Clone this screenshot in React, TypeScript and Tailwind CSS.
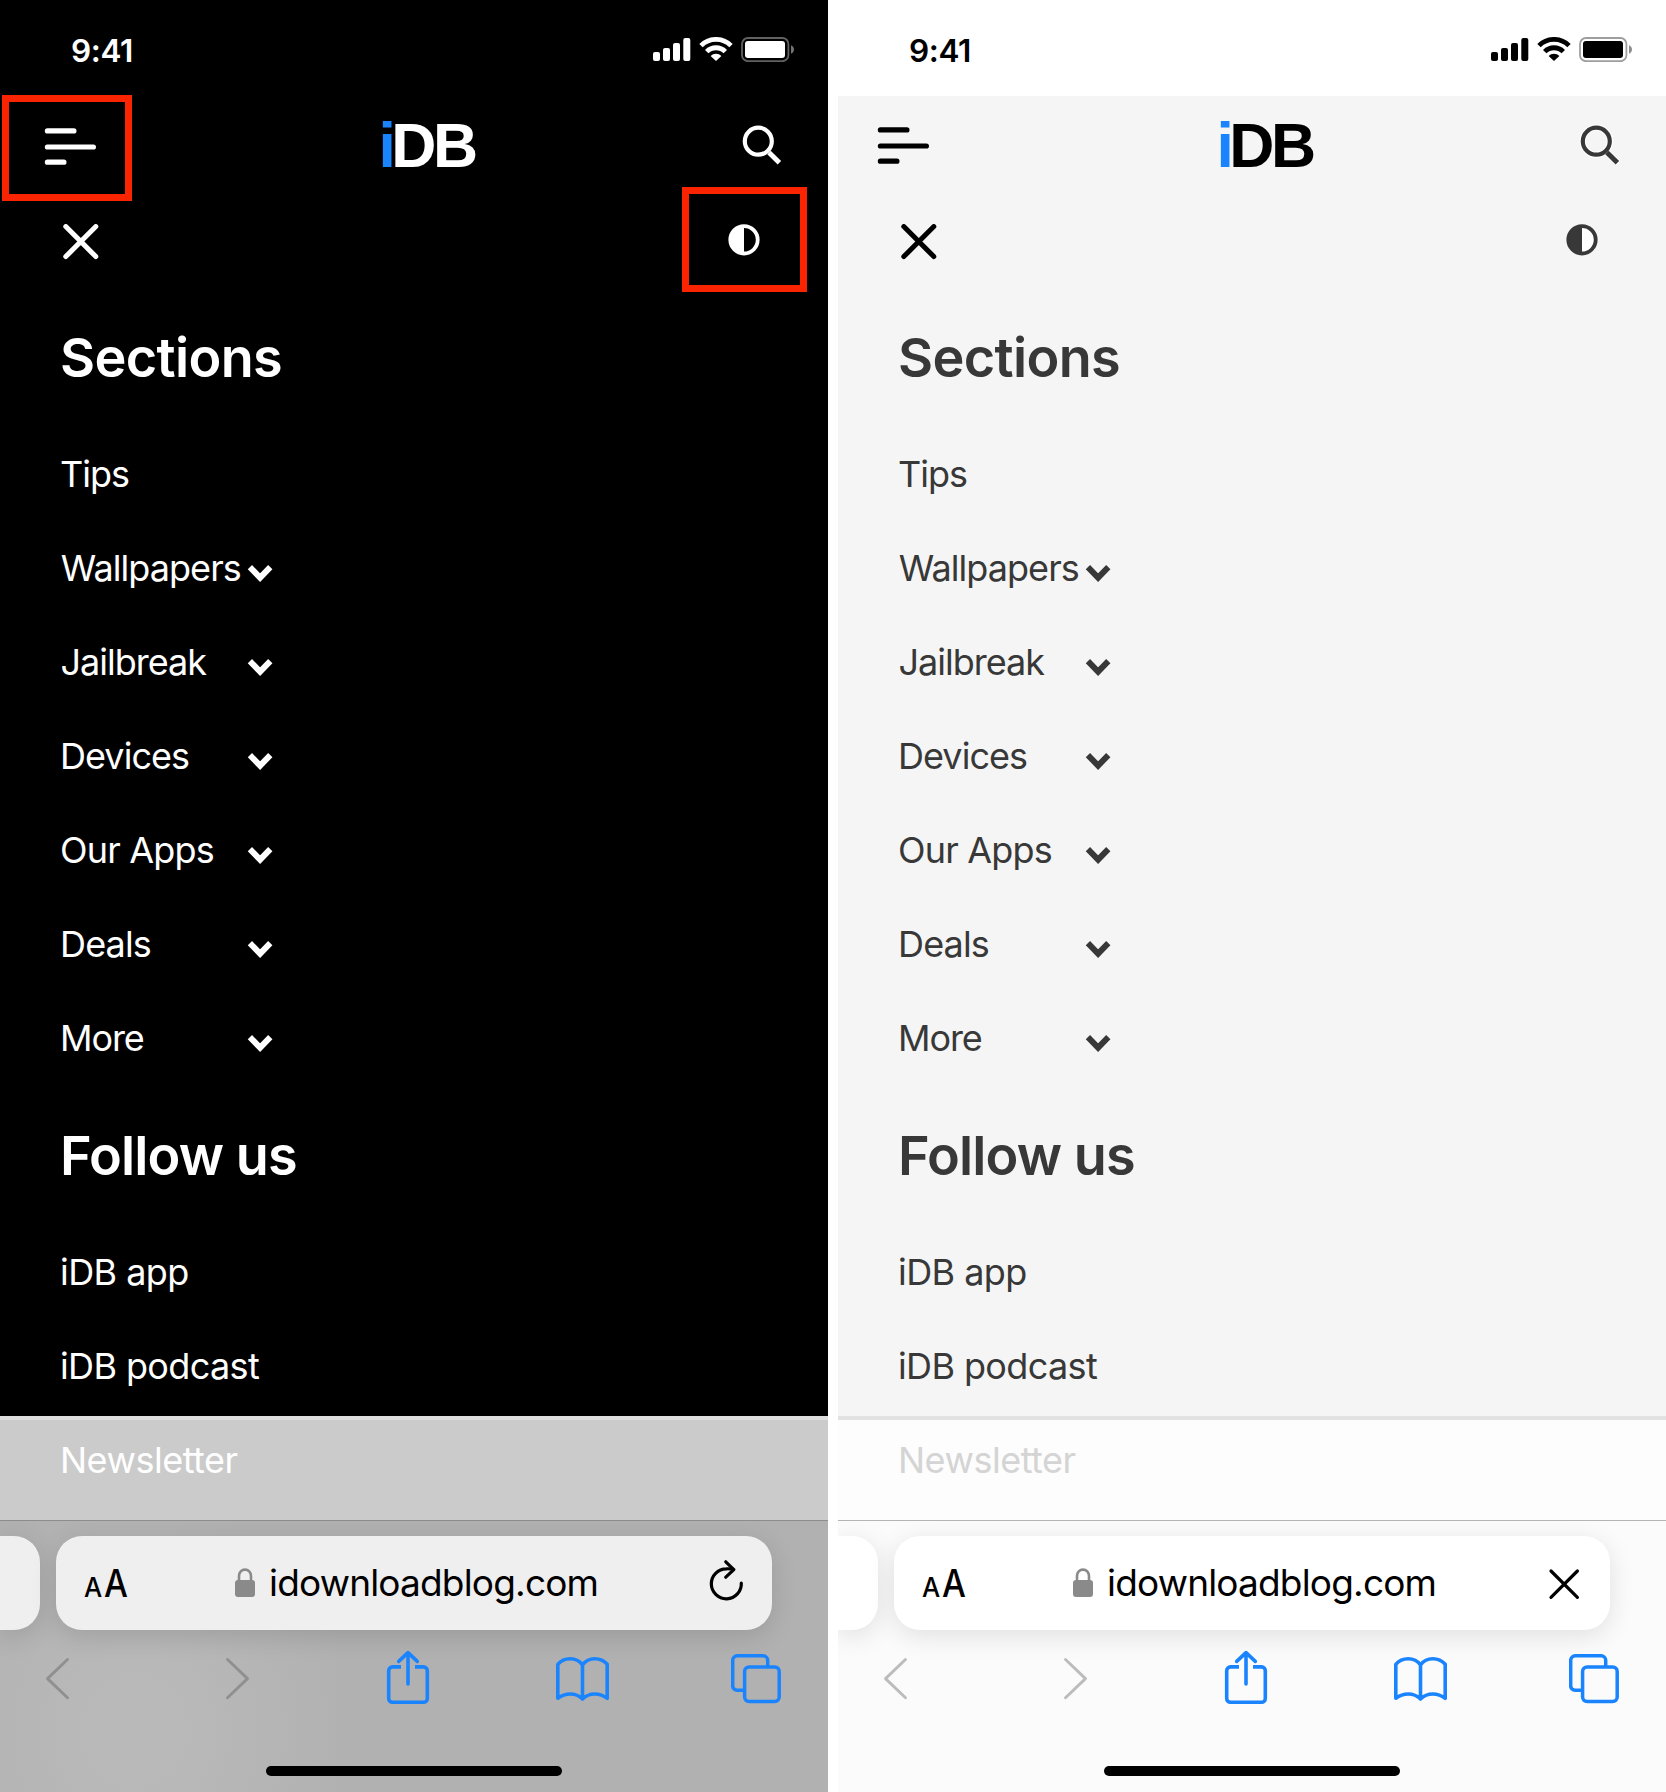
import { clsx } from "clsx";

type Theme = "dark" | "light";

type Entry = { label: string; tracking: string; expandable?: boolean };

const sections: Entry[] = [
  { label: "Tips", tracking: "tracking-[-1px]" },
  { label: "Wallpapers", tracking: "tracking-[-0.95px] pl-[0.8px]", expandable: true },
  { label: "Jailbreak", tracking: "tracking-[-1px] pl-[0.5px]", expandable: true },
  { label: "Devices", tracking: "tracking-[-0.95px]", expandable: true },
  { label: "Our Apps", tracking: "tracking-[-0.8px]", expandable: true },
  { label: "Deals", tracking: "tracking-[-0.85px]", expandable: true },
  { label: "More", tracking: "tracking-[-1.1px]", expandable: true },
];

const followUs: Entry[] = [
  { label: "iDB app", tracking: "tracking-[-0.56px]" },
  { label: "iDB podcast", tracking: "tracking-[-0.62px]" },
];

function SignalIcon() {
  return (
    <svg width="38" height="25" viewBox="0 0 38 25" fill="currentColor">
      <rect x="0" y="15" width="7" height="9" rx="2" />
      <rect x="10" y="11" width="7" height="13" rx="2" />
      <rect x="20" y="6" width="7" height="18" rx="2" />
      <rect x="30.3" y="1" width="7" height="23" rx="2" />
    </svg>
  );
}

function WifiIcon() {
  return (
    <svg width="34" height="25" viewBox="0 0 34 25" fill="none" stroke="currentColor" strokeWidth="4.8">
      <path d="M2 8.6a21.200 21.200 0 0 1 30 0" />
      <path d="M7.7 14.6a13.200 13.200 0 0 1 18.600 0" />
      <path d="M17 24l-5.4-5.1a7.8 7.8 0 0 1 10.8 0z" fill="currentColor" stroke="none" />
    </svg>
  );
}

function BatteryIcon() {
  return (
    <svg width="54" height="25" viewBox="0 0 54 25">
      <rect x="1" y="1" width="46.4" height="23.2" rx="6" fill="none" stroke="currentColor" strokeOpacity="0.38" strokeWidth="1.8" />
      <rect x="4" y="4" width="40" height="17" rx="3" fill="currentColor" />
      <path d="M50 8.2c2 .8 3 2.400 3 4.300s-1 3.500-3 4.300z" fill="currentColor" fillOpacity="0.45" />
    </svg>
  );
}

function StatusBar({ theme }: { theme: Theme }) {
  return (
    <div className={clsx("flex h-24 shrink-0 items-start justify-between pl-[71px] pr-[33px] pt-[37px]", theme === "light" && "bg-white")}>
      <span className="text-[31.5px] font-semibold leading-[28px] tracking-[-0.4px]">9:41</span>
      <div className="flex">
        <SignalIcon />
        <div className="ml-[8px]">
          <WifiIcon />
        </div>
        <div className="ml-[8px]">
          <BatteryIcon />
        </div>
      </div>
    </div>
  );
}

function MenuIcon({ theme }: { theme: Theme }) {
  return (
    <svg
      className={clsx(theme === "light" && "-mt-px")}
      width="56"
      height="40"
      viewBox="0 0 56 40"
      fill="none"
      stroke="currentColor"
      strokeWidth="5.2"
      strokeLinecap="round"
    >
      <path d="M5.400 4.900h26.500M5.400 21h46M5.400 36.200h16.500" />
    </svg>
  );
}

function SearchIcon({ theme }: { theme: Theme }) {
  return (
    <svg width="44" height="44" viewBox="0 0 44 44" fill="none">
      {theme === "light" && (
        <g stroke="#ffffff" strokeWidth="6.4">
          <circle cx="18.300" cy="18.200" r="13.600" />
          <path d="M29 29.400l11.400 11" />
        </g>
      )}
      <circle cx="18.300" cy="18.200" r="13.500" stroke="currentColor" strokeWidth="4.200" />
      <path d="M29 29.500l10.400 10.200" stroke="currentColor" strokeWidth="5" />
    </svg>
  );
}

function CloseIcon() {
  return (
    <svg width="36" height="36" viewBox="0 0 36 36" fill="none" stroke="currentColor" strokeWidth="5" strokeLinecap="round">
      <path d="M2.800 2.600l30 30M32.800 2.600l-30 30" />
    </svg>
  );
}

function ContrastIcon({ theme }: { theme: Theme }) {
  return (
    <svg width="32" height="32" viewBox="0 0 32 32">
      <circle cx="16" cy="15.800" r="13.700" fill={theme === "light" ? "#ffffff" : "#000000"} stroke="currentColor" strokeWidth="3.800" />
      <path d="M16 1.300v29a14.500 14.500 0 0 1 0-29z" fill="currentColor" />
    </svg>
  );
}

function ChevronDown() {
  return (
    <svg className="mt-[44px] shrink-0" width="26" height="18" viewBox="0 0 26 18" fill="none" stroke="currentColor" strokeWidth="6">
      <path d="M2.900 2.200l10.200 10.400L23.300 2.200" />
    </svg>
  );
}

function Logo() {
  return (
    <div className="flex font-['Liberation_Sans',sans-serif] text-[62.5px] font-bold leading-[62px]">
      <span className="tracking-[-4.7px] text-[#1a84ff]">i</span>
      <span className="tracking-[-3.2px]">DB</span>
    </div>
  );
}

function NavRow({ entry }: { entry: Entry }) {
  return (
    <li className="flex h-[94px]">
      <span className={clsx("w-[187px] shrink-0 whitespace-nowrap text-[36px] leading-[94px]", entry.tracking)}>{entry.label}</span>
      {entry.expandable && <ChevronDown />}
    </li>
  );
}

function Highlight({ className }: { className: string }) {
  return <div className={clsx("absolute border-[7.5px] border-[#fa2400]", className)} />;
}

function ReloadIcon() {
  return (
    <svg width="40" height="44" viewBox="0 0 40 44" fill="none" stroke="currentColor" strokeWidth="3.200" strokeLinecap="round" strokeLinejoin="round">
      <path d="M35.300 23A15 15 0 1 1 20.300 8.800c2.400-.1 4.800 0 7 .6" />
      <path d="M19.800 1.800l8 7.800-8 7.600" />
    </svg>
  );
}

function StopIcon() {
  return (
    <svg width="40" height="44" viewBox="0 0 40 44" fill="none" stroke="currentColor" strokeWidth="3.200" strokeLinecap="round">
      <path d="M7 11l26.400 26.400M33.400 11L7 37.400" />
    </svg>
  );
}

function LockIcon() {
  return (
    <svg width="20" height="30" viewBox="0 0 20 30" fill="none">
      <rect x="0" y="12" width="20" height="17" rx="3" fill="#8a8a8a" />
      <path d="M4 13V8a6 6.400 0 0 1 12 0V13" stroke="#8a8a8a" strokeWidth="2.600" />
    </svg>
  );
}

function AddressBar({ theme }: { theme: Theme }) {
  const pill = clsx(
    "h-[94px] shrink-0",
    theme === "dark" ? "bg-[#efefef] shadow-[0_6px_26px_rgba(0,0,0,0.13)]" : "bg-white shadow-[0_6px_26px_rgba(0,0,0,0.11)]",
  );
  return (
    <div className="flex gap-4 pt-[15px]">
      <div className={clsx(pill, "w-10 rounded-r-[26px]")} />
      <div className={clsx(pill, "flex w-[716px] rounded-[26px] text-black")}>
        <div className="flex w-[179px] items-baseline pl-[28px] leading-[96px]">
          <span className="w-[20px] text-[27px] font-medium">
            <span className="inline-block origin-left scale-x-95">A</span>
          </span>
          <span className="text-[37.5px] font-medium">
            <span className="inline-block origin-left scale-x-90">A</span>
          </span>
        </div>
        <div className="pt-8">
          <LockIcon />
        </div>
        <span className="ml-[14px] w-[436.500px] text-[37px] leading-[94px] tracking-[-0.82px]">idownloadblog.com</span>
        <div className="pt-6">{theme === "dark" ? <ReloadIcon /> : <StopIcon />}</div>
      </div>
    </div>
  );
}

function BackIcon() {
  return (
    <svg width="26" height="56" viewBox="0 0 26 56" fill="none" stroke="currentColor" strokeWidth="2.900" strokeLinecap="round" strokeLinejoin="round">
      <path d="M22.500 9.500L2.500 28.600l20 19.100" />
    </svg>
  );
}

function ForwardIcon() {
  return (
    <svg width="26" height="56" viewBox="0 0 26 56" fill="none" stroke="currentColor" strokeWidth="2.900" strokeLinecap="round" strokeLinejoin="round">
      <path d="M2.500 9.500l20 19.100-20 19.100" />
    </svg>
  );
}

function ShareIcon() {
  return (
    <svg width="44" height="56" viewBox="0 0 44 56" fill="none" stroke="currentColor" strokeWidth="3.600" strokeLinecap="round" strokeLinejoin="round">
      <path d="M15 16.900H6.500a3.800 3.800 0 0 0-3.800 3.800v27.800a3.800 3.800 0 0 0 3.800 3.800h31a3.800 3.800 0 0 0 3.800-3.800V20.700a3.800 3.800 0 0 0-3.800-3.800H29" strokeLinecap="butt" />
      <path d="M22 34V3M12.700 11.400L22 2.600l9.300 8.800" />
    </svg>
  );
}

function BookIcon() {
  return (
    <svg width="54" height="56" viewBox="0 0 54 56" fill="none" stroke="currentColor" strokeWidth="3.600" strokeLinejoin="round">
      <path d="M26.500 14.800C23.500 10.800 19 8.700 14.200 8.700S5 10.500 1.800 14.300V48.300c3.600-2.700 8-4.300 12.400-4.300s8.900 1.700 12.300 5c3.400-3.300 7.800-5 12.300-5s8.900 1.600 12.400 4.300V14.300c-3.300-3.800-7.600-5.600-12.400-5.600s-9.300 2.100-12.300 6.100zV49.300" />
    </svg>
  );
}

function TabsIcon() {
  return (
    <svg width="52" height="56" viewBox="0 0 52 56" fill="none" stroke="currentColor" strokeWidth="3.500">
      <rect x="13.600" y="17" width="34.600" height="34.600" rx="4.500" />
      <path d="M13.600 40.300H6.200a4.500 4.500 0 0 1-4.500-4.500V10.300A4.500 4.500 0 0 1 6.200 5.800h26a4.500 4.500 0 0 1 4.500 4.500V17" />
    </svg>
  );
}

function Toolbar({ theme }: { theme: Theme }) {
  const muted = theme === "dark" ? "text-[#909090]" : "text-[#bcbcbc]";
  return (
    <div className="mt-5 flex h-14 pl-[45px] text-[#1a84ff]">
      <div className={clsx("w-[180px]", muted)}>
        <BackIcon />
      </div>
      <div className={clsx("w-[161px]", muted)}>
        <ForwardIcon />
      </div>
      <div className="w-[170px]">
        <ShareIcon />
      </div>
      <div className="w-[175px]">
        <BookIcon />
      </div>
      <TabsIcon />
    </div>
  );
}

function Phone({ theme }: { theme: Theme }) {
  const dark = theme === "dark";
  const heading = "pt-px text-[54px] font-semibold leading-[139px]";
  return (
    <div
      className={clsx(
        "relative flex h-full w-[828px] shrink-0 flex-col overflow-hidden",
        dark ? "bg-black text-white" : "bg-[#f5f5f5] text-black",
      )}
    >
      <StatusBar theme={theme} />

      <header className={clsx("flex h-[100px] shrink-0", dark ? "pl-[42px]" : "pl-[37px]")}>
        <div className={clsx("pt-[30px]", dark ? "w-[336.500px]" : "w-[341.500px]")}>
          <MenuIcon theme={theme} />
        </div>
        <div className="w-[361.500px] pt-[18px]">
          <Logo />
        </div>
        <div className={clsx("pt-[27px]", !dark && "text-[#383838]")}>
          <SearchIcon theme={theme} />
        </div>
      </header>

      <div className="flex h-[91px] shrink-0 pl-[63px] pt-[28px]">
        <div className="w-[665px]">
          <CloseIcon />
        </div>
        <div className={clsx(!dark && "text-[#383838]")}>
          <ContrastIcon theme={theme} />
        </div>
      </div>

      <nav className={clsx("h-[1129px] shrink-0 overflow-hidden pl-[60px]", !dark && "text-[#383838]")}>
        <h2 className={clsx(heading, "tracking-[-0.65px]")}>Sections</h2>
        <ul>
          {sections.map((entry) => (
            <NavRow key={entry.label} entry={entry} />
          ))}
        </ul>
        <h2 className={clsx(heading, "tracking-[-0.9px]")}>Follow us</h2>
        <ul>
          {followUs.map((entry) => (
            <NavRow key={entry.label} entry={entry} />
          ))}
        </ul>
      </nav>

      <div
        className={clsx(
          "h-[104px] shrink-0 border-t-4 pl-[60px] text-[36px] leading-[80px] tracking-[-0.5px]",
          dark ? "border-[#dedede] bg-[#cbcbcb] text-white" : "border-[#e2e2e2] bg-[#fdfdfd] text-[#d4d4d4]",
        )}
      >
        Newsletter
      </div>

      <footer
        className={clsx(
          "flex flex-1 flex-col overflow-hidden border-t",
          dark
            ? "border-[#8c8c8c] bg-[#b1b1b1] bg-[radial-gradient(ellipse_220px_240px_at_135px_210px,#b9b9b9_20%,#b1b1b1)]"
            : "border-[#b4b4b4] bg-[#fbfbfb]",
        )}
      >
        <AddressBar theme={theme} />
        <Toolbar theme={theme} />
        <div className="mt-[60px] h-[10px] w-[296px] self-center rounded-full bg-black" />
      </footer>

      {dark && (
        <>
          <Highlight className="left-[2px] top-[94.500px] h-[106.500px] w-[129.500px]" />
          <Highlight className="left-[682px] top-[187px] h-[105px] w-[125px]" />
        </>
      )}
    </div>
  );
}

export default function App() {
  return (
    <main className="flex h-[1792px] w-[1666px] gap-[10px] overflow-hidden bg-white font-['Inter',sans-serif]">
      <Phone theme="dark" />
      <Phone theme="light" />
    </main>
  );
}
